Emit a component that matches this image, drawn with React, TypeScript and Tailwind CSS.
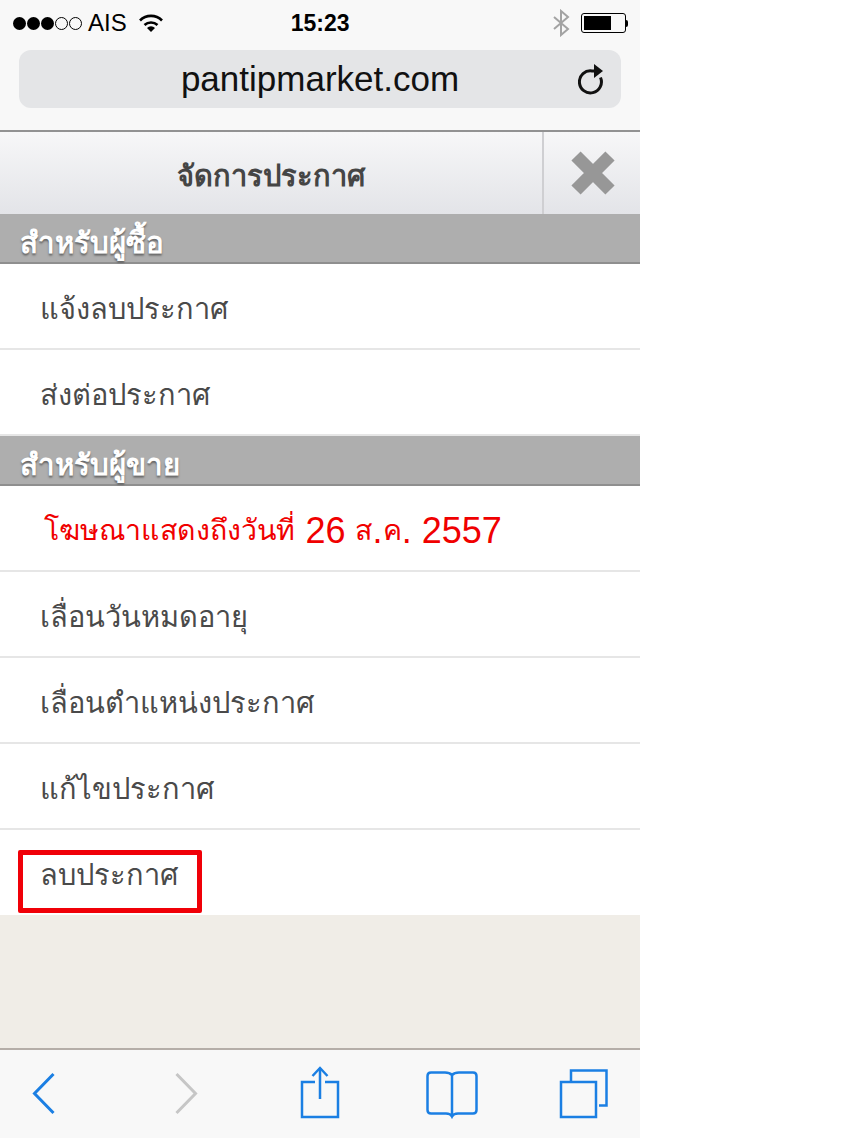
import React from 'react';

const font = "font-['Liberation_Sans','Noto_Sans','DejaVu_Sans',sans-serif]";

const Row = ({ children }: { children: React.ReactNode }) => (
  <div className="flex h-[86px] items-center border-b-2 border-[#e6e6e6] bg-white pt-[8px] pl-10 text-[29px] text-[#4a4a4a]">
    {children}
  </div>
);

const Section = ({ title }: { title: string }) => (
  <div className="flex h-[50px] items-center border-b-2 border-[#8f8f8f] bg-[#aeaeae] pt-[9px] pl-5 text-[29.5px] leading-none font-bold text-white [text-shadow:0_2px_2px_#666]">
    {title}
  </div>
);

const Thai = ({ children }: { children: React.ReactNode }) => <span className="text-[28.5px] tracking-[0.1px]">{children}</span>;

const Wifi = () => (
  <svg width="26" height="20" viewBox="0 0 26 20" fill="none" stroke="#000" strokeWidth="2.6">
    <path d="M2 7.5a15.5 15.5 0 0 1 22 0" />
    <path d="M6.5 12a9.5 9.5 0 0 1 13 0" />
    <path d="M13 19l-4-4a5.5 5.5 0 0 1 8 0z" fill="#000" stroke="none" />
  </svg>
);

export default function App() {
  return (
    <div className={`${font} min-h-[1138px] w-[842px] bg-white`}>
      <div className="flex h-[1138px] w-[640px] flex-col">
        <div className="h-[132px] border-b-2 border-[#929292] bg-[#f8f8f8]">
          <div className="flex h-[46px] items-center pr-3 pl-[13px] text-[24px] text-black">
            <div className="flex items-center gap-[1px]">
              {[0, 1, 2].map((i) => (
                <span key={i} className="h-[13px] w-[13px] rounded-full bg-black" />
              ))}
              {[0, 1].map((i) => (
                <span key={i} className="h-[13px] w-[13px] rounded-full border border-black" />
              ))}
            </div>
            <span className="ml-[6px]">AIS</span>
            <span className="ml-[11px]"><Wifi /></span>
            <span className="ml-[127px] text-[23px] font-bold">15:23</span>
            <svg className="ml-auto" width="18" height="28" viewBox="0 0 18 28" fill="none" stroke="#a3a3a3" strokeWidth="2">
              <path d="M2 8l14 12-7 6V2l7 6L2 20" />
            </svg>
            <div className="ml-[11px] flex items-center">
              <div className="h-[20px] w-[45px] rounded-[3px] border border-black p-[2px]">
                <div className="h-full w-[27px] bg-black" />
              </div>
              <div className="h-[7px] w-[2px] rounded-r-sm bg-black" />
            </div>
          </div>
          <div className="mx-[19px] mt-1 flex h-[58px] items-center rounded-[12px] bg-[#e4e5e7] pr-[15px]">
            <span className="flex-1 pl-[43px] text-center text-[35px] text-[#111]">pantipmarket.com</span>
            <svg width="28" height="32" viewBox="0 0 28 32" fill="none" stroke="#111" strokeWidth="3">
              <path d="M22.5 14.5A11 11 0 1 1 14 8h4" />
              <path d="M16 1l9 7-9 7z" fill="#111" stroke="none" />
            </svg>
          </div>
        </div>

        <div className="flex h-[82px] bg-gradient-to-b from-[#f7f7f8] to-[#e3e4e8]">
          <div className="flex flex-1 items-center justify-center pt-2 pr-[1px] text-[29px] font-bold text-[#454545]">จัดการประกาศ</div>
          <div className="flex w-[98px] items-center justify-center border-l-2 border-[#cfcfd2] pl-[2px]">
            <svg width="46" height="46" viewBox="0 0 46 46" stroke="#979797" strokeWidth="13">
              <path d="M6 6l34 34M40 6L6 40" />
            </svg>
          </div>
        </div>

        <Section title="สำหรับผู้ซื้อ" />
        <Row>แจ้งลบประกาศ</Row>
        <Row>ส่งต่อประกาศ</Row>
        <Section title="สำหรับผู้ขาย" />
        <div className="flex h-[86px] items-center border-b-2 border-[#e6e6e6] bg-white pt-[5px] pl-[44px] text-[36px] whitespace-pre text-[#f00000]">
          <Thai>โฆษณาแสดงถึงวันที่</Thai> 26 <Thai>ส</Thai>.<Thai>ค</Thai>. 2557
        </div>
        <Row>เลื่อนวันหมดอายุ</Row>
        <Row>เลื่อนตำแหน่งประกาศ</Row>
        <Row>แก้ไขประกาศ</Row>
        <div className="relative flex h-[85px] items-center bg-white pt-[7px] pl-10 text-[29px] text-[#4a4a4a]">
          ลบประกาศ
          <div className="absolute top-[20px] left-[18px] h-[63px] w-[184px] rounded-[2px] border-[5px] border-[#f00008]" />
        </div>

        <div className="flex-1 border-b-2 border-[#b5aea8] bg-[#f0ede7]" />

        <div className="h-[88px] bg-[#f8f8f8]">
          <svg className="block" width="640" height="88" viewBox="0 0 640 88" fill="none" strokeWidth="2.5">
            <path d="M53.5 24L34.5 43.5 53.5 63" stroke="#1b7fe3" strokeWidth="3" />
            <path d="M176.5 24L195.5 43.5 176.5 63" stroke="#c6c6c6" strokeWidth="3" />
            <g stroke="#1b7fe3">
              <path d="M315 32h-13v35h36V32h-13" />
              <path d="M320 18v31" />
              <path d="M312.5 26l7.5-8 7.5 8" />
              <path d="M452 25c-2-2-4-2.5-7-2.5h-14q-3.5 0-3.5 3.5v34q0 3.5 3.5 3.5h15c3 0 5 1 6 3 1-2 3-3 6-3h15q3.5 0 3.5-3.5V26q0-3.5-3.5-3.5h-14c-3 0-5 .5-7 2.5zM452 25v41" />
              <path d="M561 32h35v35h-35z" />
              <path d="M571 31V20.5h35.5V55.5H599" />
            </g>
          </svg>
        </div>
      </div>
    </div>
  );
}
